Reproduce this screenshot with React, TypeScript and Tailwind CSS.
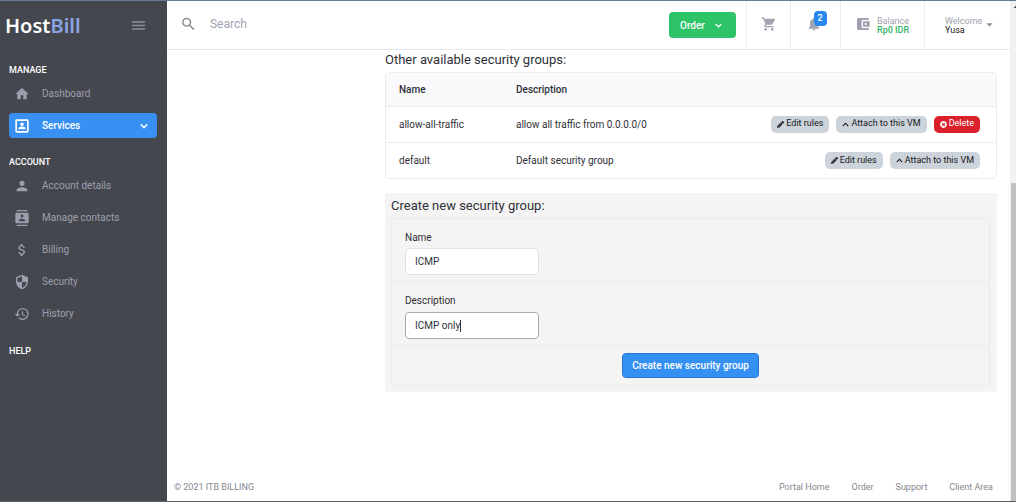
import { useState, type ComponentType } from "react";
import {
  MdAccountBalanceWallet,
  MdArrowDropDown,
  MdArrowDropUp,
  MdAttachMoney,
  MdContacts,
  MdHistory,
  MdHome,
  MdMenu,
  MdNotifications,
  MdPerson,
  MdSearch,
  MdSecurity,
  MdShoppingCart,
} from "react-icons/md";
import { FaChevronUp, FaPencilAlt, FaTimesCircle } from "react-icons/fa";

type Icon = ComponentType<{ className?: string }>;

function AccountBoxIcon({ className }: { className?: string }) {
  return (
    <svg viewBox="0 0 24 24" fill="currentColor" className={className} aria-hidden="true">
      <path
        fillRule="evenodd"
        d="M4 2h16a2 2 0 0 1 2 2v16a2 2 0 0 1-2 2H4a2 2 0 0 1-2-2V4a2 2 0 0 1 2-2zm.5 2.500v15h15v-15h-15z"
      />
      <circle cx="12" cy="9.5" r="2.7" />
      <path d="M6.500 17v-1c0-2 3.200-3.200 5.500-3.200s5.500 1.200 5.500 3.200v1z" />
    </svg>
  );
}

function ChevronDown({ className }: { className?: string }) {
  return (
    <svg viewBox="0 0 8 8" fill="none" stroke="currentColor" strokeWidth="1.5" className={className} aria-hidden="true">
      <path d="M0.7 2.3 4 5.6 7.3 2.3" />
    </svg>
  );
}

function NavItem({ icon: ItemIcon, label }: { icon: Icon; label: string }) {
  return (
    <a href="#" className="flex h-[25px] items-center rounded px-[5px] text-[#9d9fae]">
      <ItemIcon className="size-4" />
      <span className="ml-[12px]">{label}</span>
    </a>
  );
}

function NavTitle({ children }: { children: string }) {
  return <h2 className="text-[9px] leading-3 font-medium text-white">{children}</h2>;
}

function Sidebar() {
  return (
    <aside className="flex w-[167px] shrink-0 flex-col bg-[#45474f] text-[10px]">
      <div className="flex h-[49px] items-center justify-between pr-[20px] pl-[5px]">
        <a href="#" className="font-['Noto_Sans',sans-serif] text-[20px] leading-6 font-semibold text-white">
          Host<span className="text-[#8ba4e4]">Bill</span>
        </a>
        <button type="button" aria-label="Toggle menu" className="text-[#8d8f9c]">
          <MdMenu className="size-[17px]" />
        </button>
      </div>
      <nav className="flex flex-col pt-[14px] pr-[10px] pl-[9px]">
        <NavTitle>MANAGE</NavTitle>
        <div className="mt-[5px] flex flex-col gap-[7px]">
          <NavItem icon={MdHome} label="Dashboard" />
          <a href="#" className="flex h-[25px] items-center rounded bg-[#3990f3] px-[5px] font-medium text-white">
            <AccountBoxIcon className="size-4" />
            <span className="ml-[12px]">Services</span>
            <ChevronDown className="mr-[4px] ml-auto size-[8px]" />
          </a>
        </div>
        <div className="mt-[18px]">
          <NavTitle>ACCOUNT</NavTitle>
        </div>
        <div className="mt-[5px] flex flex-col gap-[7px]">
          <NavItem icon={MdPerson} label="Account details" />
          <NavItem icon={MdContacts} label="Manage contacts" />
          <NavItem icon={MdAttachMoney} label="Billing" />
          <NavItem icon={MdSecurity} label="Security" />
          <NavItem icon={MdHistory} label="History" />
        </div>
        <div className="mt-[19px]">
          <NavTitle>HELP</NavTitle>
        </div>
      </nav>
    </aside>
  );
}

function TopBar() {
  return (
    <header className="flex h-[49px] shrink-0 border-b border-[#e8e8ec] text-[9px] text-[#a2a3b0]">
      <label className="flex flex-1 items-center pb-[2px] pl-[13px]">
        <MdSearch className="size-[18px] text-[#85868f]" />
        <input
          type="search"
          aria-label="Search"
          placeholder="Search"
          className="ml-[13px] w-full text-[12px] outline-none placeholder:text-[#a2a3b0]"
        />
      </label>
      <div className="flex items-center pr-[10px]">
        <button
          type="button"
          className="flex h-[26px] w-[67px] items-center justify-between rounded bg-[#2dc467] pr-[14px] pl-[11px] text-[10px] font-medium text-white"
        >
          Order
          <ChevronDown className="size-[7px]" />
        </button>
      </div>
      <button type="button" aria-label="Cart" className="flex w-[44px] items-center justify-center border-l border-[#ececf0] pb-[2px]">
        <MdShoppingCart className="size-4" />
      </button>
      <button
        type="button"
        aria-label="Notifications"
        className="flex w-[50px] items-center justify-center border-l border-[#ececf0] pb-[2px]"
      >
        <span className="relative pr-[4px]">
          <MdNotifications className="size-4" />
          <span className="absolute -top-[5px] left-[8px] flex h-[15px] w-[13px] items-center justify-center rounded bg-[#2a87f0] text-[9px] font-medium text-white">
            2
          </span>
        </span>
      </button>
      <a href="#" className="flex w-[84px] items-center border-l border-[#ececf0] pb-[2px] pl-[14px]">
        <MdAccountBalanceWallet className="size-4" />
        <span className="ml-[6px] flex flex-col pt-[3px] leading-[9px]">
          <span>Balance</span>
          <span className="font-medium text-[#35b567]">Rp0 IDR</span>
        </span>
      </a>
      <button type="button" className="flex w-[86px] items-center border-l border-[#ececf0] pb-[2px] pl-[20px] text-left">
        <span className="flex flex-col pt-[3px] leading-[9px]">
          <span>Welcome</span>
          <span className="text-[#14151a]">Yusa</span>
        </span>
        <MdArrowDropDown className="size-[15px] text-[#8d8f9c]" />
      </button>
    </header>
  );
}

function RowButton({ icon: ButtonIcon, label, danger = false }: { icon: Icon; label: string; danger?: boolean }) {
  return (
    <button
      type="button"
      className={
        danger
          ? "flex h-[17px] items-center gap-[2px] rounded-[5px] bg-[#d9202b] px-[6px] text-[9px] text-white"
          : "flex h-[17px] items-center gap-[2px] rounded-[5px] bg-[#cdd3da] px-[6px] text-[9px] text-[#15161b]"
      }
    >
      <ButtonIcon className="size-[7px]" />
      {label}
    </button>
  );
}

const groups = [
  { name: "allow-all-traffic", description: "allow all traffic from 0.0.0.0/0", removable: true },
  { name: "default", description: "Default security group", removable: false },
];

function GroupsTable() {
  return (
    <div className="mt-[4px] overflow-hidden rounded border border-[#ebebef]">
      <table className="w-full text-left text-[10px] text-[#2f3037]">
        <thead className="bg-[#fafafc]">
          <tr className="h-[33px]">
            <th className="w-[117px] pl-[13px] font-medium">Name</th>
            <th className="pl-[13px] font-medium">Description</th>
            <th aria-label="Actions" />
          </tr>
        </thead>
        <tbody>
          {groups.map((group) => (
            <tr key={group.name} className="h-[36px] border-t border-[#ebebef]">
              <td className="pl-[13px]">{group.name}</td>
              <td className="pl-[13px]">{group.description}</td>
              <td className="pr-[16px]">
                <div className="flex justify-end gap-[7px]">
                  <RowButton icon={FaPencilAlt} label="Edit rules" />
                  <RowButton icon={FaChevronUp} label="Attach to this VM" />
                  {group.removable && <RowButton icon={FaTimesCircle} label="Delete" danger />}
                </div>
              </td>
            </tr>
          ))}
        </tbody>
      </table>
    </div>
  );
}

function CreateGroupForm() {
  const [name, setName] = useState("ICMP");
  const [description, setDescription] = useState("ICMP only");

  return (
    <form onSubmit={(e) => e.preventDefault()} className="mt-[14px] bg-[#f4f4f4] px-[6px] pt-[5px] pb-[6px]">
      <h3 className="text-[13px] leading-4 text-[#2f3037]">Create new security group:</h3>
      <div className="mt-[4px] mr-px rounded border border-[#ebebed] text-[10px] text-[#2f3037]">
        <div className="px-[13px] pt-[12px] pb-[6px]">
          <label htmlFor="group-name" className="block leading-[14px]">
            Name
          </label>
          <input
            id="group-name"
            value={name}
            onChange={(e) => setName(e.target.value)}
            className="mt-[3px] block h-[27px] w-[134px] rounded border border-[#e2e2e6] bg-white px-[9px] outline-none"
          />
        </div>
        <div className="border-t border-[#ebebed] px-[13px] pt-[12px] pb-[6px]">
          <label htmlFor="group-description" className="block leading-[14px]">
            Description
          </label>
          <div className="relative mt-[4px] w-[134px]">
            <input
              id="group-description"
              value={description}
              onChange={(e) => setDescription(e.target.value)}
              className="block h-[27px] w-full rounded border border-[#a9abb9] bg-white px-[9px] caret-transparent outline-none"
            />
            {/* Caret that follows the end of the typed text */}
            <div
              aria-hidden="true"
              className="pointer-events-none absolute inset-0 flex items-center overflow-hidden pl-[10px] whitespace-pre"
            >
              <span className="invisible">{description}</span>
              <span className="h-[12px] w-px shrink-0 bg-[#2f3037]" />
            </div>
          </div>
        </div>
        <div className="flex justify-center border-t border-[#ebebed] py-[7px]">
          <button
            type="submit"
            className="h-[25px] rounded border border-[#2377d6] bg-[#3490f3] px-[9px] text-[10px] font-medium text-white"
          >
            Create new security group
          </button>
        </div>
      </div>
    </form>
  );
}

function Footer() {
  return (
    <footer className="mt-auto flex items-center justify-between pr-[17px] pb-[8px] pl-[7px] text-[9px] leading-3 text-[#85868f]">
      <span>© 2021 ITB BILLING</span>
      <nav className="flex gap-[22px]">
        <a href="#">Portal Home</a>
        <a href="#">Order</a>
        <a href="#">Support</a>
        <a href="#">Client Area</a>
      </nav>
    </footer>
  );
}

export default function App() {
  return (
    <div className="flex min-h-screen border-t border-b border-t-[#667a92] border-b-[#5d5f66] bg-white font-[Roboto,sans-serif]">
      <Sidebar />
      <main className="flex min-w-0 flex-1 flex-col">
        <TopBar />
        <section className="mr-[13px] ml-[218px] pt-[2px]">
          <h3 className="text-[13px] leading-4 text-[#2f3037]">Other available security groups:</h3>
          <GroupsTable />
          <CreateGroupForm />
        </section>
        <Footer />
      </main>
      <div aria-hidden="true" className="flex w-[6px] shrink-0 flex-col overflow-hidden bg-[#f1f1f1]">
        <MdArrowDropUp className="size-3 shrink-0 text-[#505050]" />
        <div className="mt-[170px] ml-px flex-1 bg-[#c1c1c1]" />
      </div>
    </div>
  );
}
